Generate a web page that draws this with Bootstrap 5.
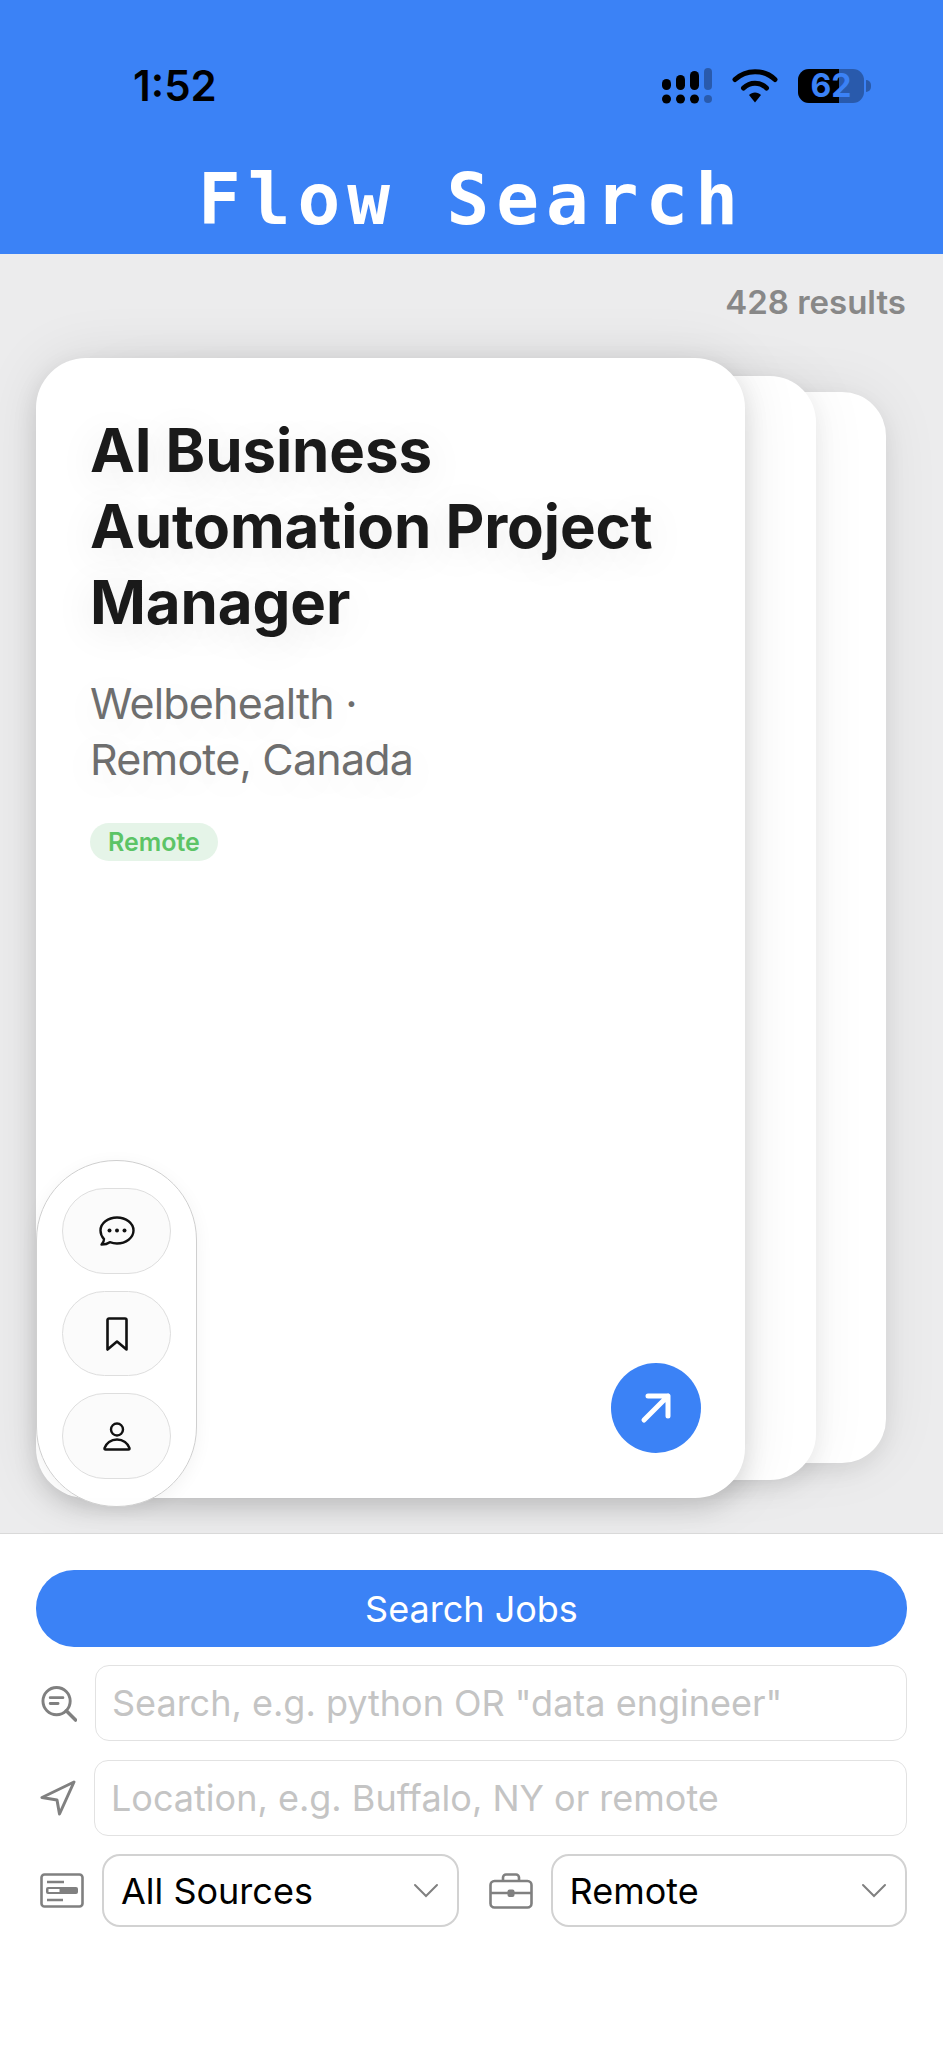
<!DOCTYPE html>
<html lang="en">
<head>
    <meta charset="UTF-8">
    <meta name="viewport" content="width=device-width, initial-scale=1.0">
    <title>Flow Search</title>
    <link href="https://cdn.jsdelivr.net/npm/bootstrap@5.3.0/dist/css/bootstrap.min.css" rel="stylesheet">
    <style>
        body { font-family: Inter, "Liberation Sans", sans-serif; background: #fff; height: 2048px; color: #000; }
        .app-head { height: 254px; background: #3b82f6; padding: 64px 72px 0 133px; flex: none; }
        .status-row { height: 44px; }
        .clock { font-size: 42px; font-weight: 600; line-height: 44px; }
        .batt { width: 66px; height: 34px; border-radius: 11px; background: rgba(0,0,0,.3); color: #3b82f6; font-size: 32px; font-weight: 700; line-height: 34px; text-align: center; }
        .batt-fill { top: 0; bottom: 0; left: 0; background: #000; border-radius: 11px 0 0 11px; }
        .batt-num { z-index: 1; }
        .batt-nub { width: 5px; height: 12px; background: rgba(0,0,0,.3); border-radius: 0 5px 5px 0; margin-left: 2px; }
        .app-title { font-family: "DejaVu Sans Mono", "Liberation Mono", monospace; font-size: 71px; font-weight: 700; line-height: 80px; letter-spacing: 7px; color: #fff; margin: 52px 0 0 -61px; text-align: center; }
        .app-main { background: #ececed; height: 1279px; overflow: hidden; flex: none; }
        .count-line { font-size: 33px; font-weight: 600; line-height: 40px; color: #888; padding: 28px 37px 0 0; text-align: right; }
        .stack { margin: 36px 0 0 36px; width: 709px; height: 1140px; }
        .job-card { border: 0; background: #fff; position: absolute; }
        .job-back-2 { left: 120px; right: -141px; top: 34px; bottom: 35px; border-radius: 44px; box-shadow: 0 8px 22px rgba(0,0,0,.07), 0 0 60px rgba(0,0,0,.07); }
        .job-back-1 { left: 60px; right: -71px; top: 18px; bottom: 18px; border-radius: 46px; box-shadow: 0 8px 22px rgba(0,0,0,.07), 0 0 60px rgba(0,0,0,.06); }
        .job-front { inset: 0; border-radius: 50px; padding: 54px 54px; box-shadow: 0 10px 24px rgba(0,0,0,.12), 0 0 60px rgba(0,0,0,.09); }
        .job-title { font-size: 60px; font-weight: 700; line-height: 76px; letter-spacing: -.1px; color: #1a1a1a; margin: 0; text-shadow: 0 8px 40px rgba(0,0,0,.1); }
        .job-sub { font-size: 43px; line-height: 56px; letter-spacing: -.8px; color: #6e6e6e; margin: 35px 0 36px; text-shadow: 0 8px 40px rgba(0,0,0,.09); }
        .tag-remote { display: inline-block; background: #e5f4e8; color: #5cc466; font-size: 25px; font-weight: 600; line-height: 38px; padding: 0 18px; border-radius: 19px; }
        .side-pill { left: 0; top: 802px; width: 161px; height: 347px; padding: 27px 25px; background: rgba(255,255,255,.97); border: 1px solid #cfcfcf; border-radius: 80px; gap: 17px; box-shadow: 0 4px 18px rgba(0,0,0,.05); z-index: 3; }
        .side-btn { width: 109px; height: 86px; padding: 0; background: #fbfbfb; border: 1px solid #dedede; border-radius: 43px; }
        .go-btn { right: 44px; bottom: 45px; width: 90px; height: 90px; padding: 0; background: #3b82f6; border: 0; border-radius: 50%; }
        .app-foot { flex: 1 1 auto; background: #fff; border-top: 1px solid #d9d9d9; padding: 36px 36px 0; }
        .search-btn { height: 77px; padding: 0; margin-bottom: 18px; background: #3b82f6; border: 0; border-radius: 38px; color: #fff; font-size: 36px; line-height: 1; }
        .field-row { gap: 18px; padding-left: 4px; margin-bottom: 19px; }
        .field-row + .pick-row { margin-top: -1px; }
        .find-ico { margin-left: 1px; }
        .field-row .form-control { height: 76px; padding: 0 16px; font-family: Inter, sans-serif; font-size: 36px; border: 1.5px solid #e2e2e2; border-radius: 14px; }
        .field-row .form-control::placeholder { color: #c4c4c4; opacity: 1; }
        .pick-row { gap: 30px; padding-left: 4px; }
        .pick-group { flex: 1 1 0; gap: 18px; min-width: 0; }
        .pick-group .form-select { height: 73px; padding: 0 60px 0 17px; font-size: 36px; color: #000; border: 2px solid #d2d2d2; border-radius: 18px; background-size: 26px 16px; background-position: right 18px center; background-image: url("data:image/svg+xml,%3csvg xmlns='http://www.w3.org/2000/svg' viewBox='0 0 26 16'%3e%3cpath fill='none' stroke='%23808080' stroke-width='2' stroke-linecap='round' d='M2 2l11 11L24 2'/%3e%3c/svg%3e"); }
    </style>
</head>
<body class="d-flex flex-column">

<header class="app-head">
    <div class="status-row d-flex align-items-center justify-content-between">
        <span class="clock">1:52</span>
        <div class="d-flex align-items-center">
            <svg width="50" height="36" viewBox="0 0 50 36" class="me-3 flex-shrink-0">
                <rect x="0" y="11" width="9" height="11" rx="4.5"/>
                <rect x="14" y="7" width="9" height="15" rx="4.5"/>
                <rect x="28" y="3" width="9" height="19" rx="4.5"/>
                <rect x="42" y="0" width="8" height="22" rx="4" opacity=".3"/>
                <circle cx="4.5" cy="31" r="4.5"/>
                <circle cx="18.5" cy="31" r="4.5"/>
                <circle cx="32.5" cy="31" r="4.5"/>
                <circle cx="46" cy="31" r="4" opacity=".3"/>
            </svg>
            <svg width="46" height="34" viewBox="0 0 46 34" class="ms-1 me-3 flex-shrink-0">
                <path d="M3 10.5C14 0 32 0 43 10.500" fill="none" stroke="#000" stroke-width="5" stroke-linecap="round"/>
                <path d="M11.500 19C18 12.500 28 12.500 34.500 19" fill="none" stroke="#000" stroke-width="5" stroke-linecap="round"/>
                <path d="M17 26c3-3.500 9-3.500 12 0l-6 7.500z"/>
            </svg>
            <div class="batt position-relative ms-1">
                <div class="batt-fill position-absolute" style="width: 62%"></div>
                <span class="batt-num position-relative">62</span>
            </div>
            <div class="batt-nub"></div>
        </div>
    </div>
    <h1 class="app-title">Flow Search</h1>
</header>

<main class="app-main">
    <div class="count-line">428 results</div>
    <div class="stack position-relative">
        <div class="card job-card job-back-2"></div>
        <div class="card job-card job-back-1"></div>
        <div class="card job-card job-front">
            <h2 class="job-title">AI Business Automation Project Manager</h2>
            <p class="job-sub">Welbehealth ·<br>Remote, Canada</p>
            <div><span class="tag-remote">Remote</span></div>
            <button type="button" class="btn go-btn position-absolute" aria-label="Open">
                <svg width="34" height="34" viewBox="0 0 34 34" fill="none" stroke="#fff" stroke-width="5" stroke-linecap="round" stroke-linejoin="round"><path d="M5 29L29 5M9 5h20v20"/></svg>
            </button>
        </div>
        <div class="side-pill position-absolute d-flex flex-column">
            <button type="button" class="btn side-btn" aria-label="Chat">
                <svg width="36" height="30" viewBox="0 0 36 30" fill="none" stroke="#111" stroke-width="2.400" stroke-linejoin="round"><path d="M18 1.500c9 0 16.500 5.800 16.500 13S27 27.500 18 27.500c-2.600 0-5-.5-7.200-1.300-2 1.500-4.800 2.300-8.300 2.300 1.700-1.700 2.600-3.500 2.500-5.400C2.900 20.800 1.500 17.800 1.500 14.500c0-7.200 7.500-13 16.500-13z"/><circle cx="10.500" cy="14.500" r="2" fill="#111" stroke="none"/><circle cx="18" cy="14.500" r="2" fill="#111" stroke="none"/><circle cx="25.500" cy="14.500" r="2" fill="#111" stroke="none"/></svg>
            </button>
            <button type="button" class="btn side-btn" aria-label="Save">
                <svg width="22" height="34" viewBox="0 0 22 34" fill="none" stroke="#111" stroke-width="2.600" stroke-linejoin="round"><path d="M3 1.500h16a1.500 1.500 0 0 1 1.500 1.500v29.500L11 24.500 1.500 32.500V3A1.500 1.500 0 0 1 3 1.500z"/></svg>
            </button>
            <button type="button" class="btn side-btn" aria-label="Profile">
                <svg width="28" height="29" viewBox="0 0 28 29" fill="none" stroke="#111" stroke-width="2.400" stroke-linejoin="round"><circle cx="14" cy="7.500" r="6"/><path d="M2.500 27.500h23c.8 0 1.200-.5 1-1.300C25 21 20 17.500 14 17.500S3 21 1.500 26.200c-.2.800.2 1.300 1 1.300z"/></svg>
            </button>
        </div>
    </div>
</main>

<footer class="app-foot">
    <button type="button" class="btn search-btn w-100 d-block">Search Jobs</button>
    <div class="field-row d-flex align-items-center">
        <svg width="36" height="37" viewBox="0 0 37 37" fill="none" stroke="#808080" stroke-width="3" stroke-linecap="round" class="find-ico flex-shrink-0"><circle cx="16" cy="16" r="14"/><path d="M26 26l9.500 9.500" stroke-width="3.600"/><path d="M9.500 12.500h13M9.500 18.500h8"/></svg>
        <input type="text" class="form-control" placeholder='Search, e.g. python OR "data engineer"'>
    </div>
    <div class="field-row d-flex align-items-center">
        <svg width="36" height="36" viewBox="0 0 36 36" fill="none" stroke="#808080" stroke-width="3" stroke-linejoin="round" class="flex-shrink-0"><path d="M34 2L2 17.500l15 2.500 2.500 14z"/></svg>
        <input type="text" class="form-control" placeholder="Location, e.g. Buffalo, NY or remote">
    </div>
    <div class="pick-row d-flex">
        <div class="pick-group d-flex align-items-center">
            <svg width="44" height="35" viewBox="0 0 44 35" fill="none" stroke="#808080" stroke-width="2.600" class="flex-shrink-0"><rect x="1.500" y="1.500" width="41" height="32" rx="3"/><path d="M7 9h17M7 27h16"/><rect x="6" y="14" width="32" height="7" rx="2" fill="#808080" stroke="none"/><rect x="8.500" y="16" width="11" height="3" fill="#fff" stroke="none"/></svg>
            <select class="form-select"><option>All Sources</option></select>
        </div>
        <div class="pick-group d-flex align-items-center">
            <svg width="44" height="36" viewBox="0 0 44 36" fill="none" stroke="#808080" stroke-width="2.600" class="flex-shrink-0"><rect x="1.500" y="8" width="41" height="26.500" rx="4"/><path d="M14 8V4.500a3 3 0 0 1 3-3h10a3 3 0 0 1 3 3V8M1.500 20h41"/><rect x="18.500" y="16.500" width="7" height="7.500" rx="2" fill="#808080" stroke="none"/></svg>
            <select class="form-select"><option>Remote</option></select>
        </div>
    </div>
</footer>

<script src="https://cdn.jsdelivr.net/npm/bootstrap@5.3.0/dist/js/bootstrap.bundle.min.js"></script>
</body>
</html>
